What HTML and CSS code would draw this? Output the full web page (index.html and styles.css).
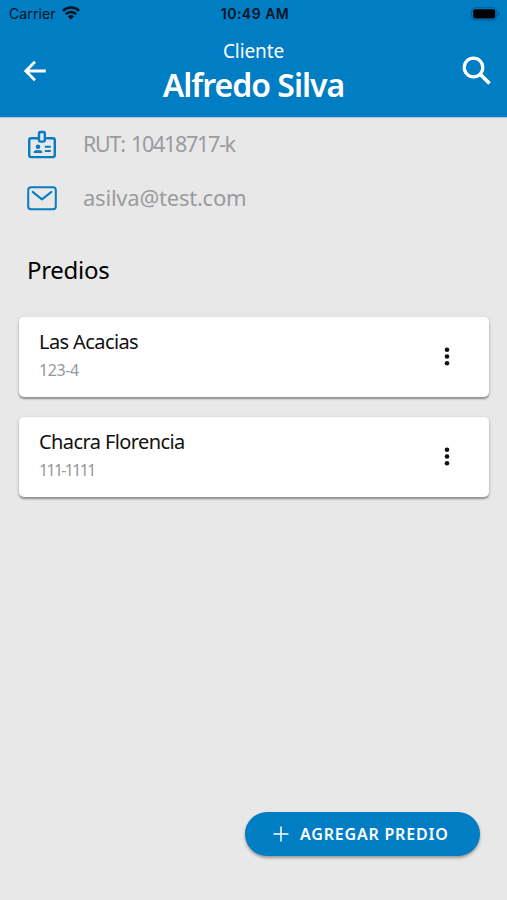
FILE: index.html
```html
<!DOCTYPE html>
<html lang="es">
<head>
<meta charset="utf-8">
<title>Cliente</title>
<link rel="stylesheet" href="styles.css">
</head>
<body>
<div class="screen">
  <header class="header">
    <div class="status">
      <div class="carrier"><span class="carrier-name">Carrier</span>
        <svg class="wifi" width="18" height="14" viewBox="0 0 18 14"><g fill="none" stroke="#001321" stroke-width="2.6"><path d="M.9 4.9a11.5 11.5 0 0 1 16.2 0"/><path d="M3.9 8.1a7.2 7.2 0 0 1 10.2 0"/></g><path fill="#001321" d="M5.9 10.3a4.4 4.4 0 0 1 6.2 0L9 13.5z"/></svg>
      </div>
      <span class="clock">10:49 AM</span>
      <svg class="battery" width="30" height="14" viewBox="0 0 30 14"><rect x=".7" y=".7" width="25" height="12.4" rx="3.4" fill="none" stroke="#005c94"/><rect x="2.2" y="2.2" width="22" height="9.4" rx="2" fill="#000"/><path d="M27 5v4q1.600-.6 1.600-2T27 5z" fill="#005c94"/></svg>
    </div>
    <div class="bar">
      <svg class="back" width="24" height="24" viewBox="0 0 24 24"><path d="M22.800 12H3M12 2.800 2.800 12l9.200 9.200" fill="none" stroke="#fff" stroke-width="2.800"/></svg>
      <div class="titles"><span class="kicker">Cliente</span><h1 class="name">Alfredo Silva</h1></div>
      <svg class="search" width="30" height="30" viewBox="0 0 30 30"><circle cx="11.500" cy="11.500" r="9.300" fill="none" stroke="#fff" stroke-width="3.200"/><path d="m18.500 18.500 9 9" stroke="#fff" stroke-width="3.700"/></svg>
    </div>
  </header>
  <main class="content">
    <div class="info">
      <svg width="30" height="30" viewBox="0 0 30 30"><g fill="none" stroke="#087cc1" stroke-width="2.400"><path d="M11.500 9.300H4.300Q2.200 9.300 2.200 11.400v14.600q0 2.100 2.100 2.100h21.400q2.100 0 2.100-2.100V11.400q0-2.100-2.100-2.100h-7.200"/><rect x="12" y="3" width="5.800" height="9.600" rx="1.600"/></g><g fill="#087cc1"><circle cx="11" cy="17.800" r="2.300"/><path d="M6.700 24.100v-1q0-2.200 4.300-2.200t4.300 2.200v1zM17.800 16.800h6v1.900h-6zM17.800 21.100h6v1.900h-6z"/></g></svg>
      <span class="rut">RUT: 10418717-k</span>
    </div>
    <div class="info">
      <svg width="30" height="30" viewBox="0 0 30 30"><g fill="none" stroke="#087cc1" stroke-width="2" stroke-linecap="round" stroke-linejoin="round"><rect x="1.200" y="4.300" width="27.600" height="22" rx="2.800"/><path d="m5.600 8.900 9.400 7.500 9.400-7.500"/></g></svg>
      <span class="mail">asilva@test.com</span>
    </div>
    <h2 class="section">Predios</h2>
    <div class="cards">
      <article class="card">
        <div class="card-text"><h3 class="card-title">Las Acacias</h3><p class="code">123-4</p></div>
        <svg width="6" height="20" viewBox="0 0 6 20" fill="#111"><circle cx="3" cy="2.700" r="2.300"/><circle cx="3" cy="9.500" r="2.300"/><circle cx="3" cy="16.300" r="2.300"/></svg>
      </article>
      <article class="card">
        <div class="card-text"><h3 class="card-title">Chacra Florencia</h3><p class="code ones">111-1111</p></div>
        <svg width="6" height="20" viewBox="0 0 6 20" fill="#111"><circle cx="3" cy="2.700" r="2.300"/><circle cx="3" cy="9.500" r="2.300"/><circle cx="3" cy="16.300" r="2.300"/></svg>
      </article>
    </div>
  </main>
  <button class="add"><svg width="16" height="16" viewBox="0 0 16 16"><path d="M8 .5v15M.5 8h15" stroke="#fff" stroke-width="1.500"/></svg><span>AGREGAR PREDIO</span></button>
</div>
</body>
</html>
```
FILE: styles.css
```css
* { box-sizing: border-box; margin: 0; padding: 0; }
body { background: #e8e8e8; font-family: "Noto Sans", sans-serif; }
svg { display: block; flex: none; }
.screen { width: 507px; height: 900px; display: flex; flex-direction: column; overflow: hidden; }
.header { height: 117px; background: #007dc3; box-shadow: 0 1px 1px #b8cbd8; }
.status { height: 27px; padding: 0 6px 0 9px; display: grid; grid-template-columns: 1fr auto 1fr; align-items: center; font-family: Inter, sans-serif; color: #001321; }
.carrier { display: flex; gap: 6px; align-items: center; font-size: 14px; letter-spacing: .1px; }
.wifi { margin-top: -2px; }
.clock { font-size: 14px; font-weight: 600; letter-spacing: .5px; }
.battery { justify-self: end; }
.bar { height: 90px; padding: 0 15px 0 23px; display: grid; grid-template-columns: 60px 1fr 68px; color: #fff; }
.back { margin-top: 32px; }
.search { justify-self: end; margin-top: 29px; }
.titles { display: flex; flex-direction: column; align-items: center; padding-top: 11px; white-space: nowrap; }
.kicker { font-size: 19px; line-height: 26px; letter-spacing: -.1px; }
.name { font-size: 32px; line-height: 42px; font-weight: 600; letter-spacing: -1px; }
.content { flex: 1; }
.info { height: 54px; padding: 0 27px; display: flex; gap: 26px; align-items: center; font-size: 22px; color: #9b9b9f; }
.mail { padding-bottom: 2px; }
.rut { letter-spacing: -1.3px; word-spacing: 2px; font-size: 21.5px; padding-bottom: 1px; }
.mail { letter-spacing: -.22px; }
.section { font-size: 24px; line-height: 34px; font-weight: 400; color: #000; padding: 0 27px; margin-top: 28px; letter-spacing: -.3px; }
.cards { display: flex; flex-direction: column; gap: 20px; padding: 0 18px 0 19px; margin-top: 30px; }
.card { height: 80px; padding: 0 39px 0 20px; display: flex; align-items: center; justify-content: space-between; background: #fff; border-radius: 5px; box-shadow: 0 2px 2px rgba(0,0,0,.34), 0 1px 4px rgba(0,0,0,.12); }
.card-text { padding-bottom: 3px; }
.card-title { font-size: 20px; line-height: 28px; font-weight: 400; color: #111; letter-spacing: -.6px; }
.code { font-size: 16px; line-height: 28px; color: #97979b; letter-spacing: -.4px; }
.ones { letter-spacing: -1.7px; }
.add { align-self: flex-end; width: 235px; height: 44px; margin: 0 27px 44px 0; padding-left: 28px; display: flex; align-items: center; gap: 11px; border: 0; border-radius: 22px; background: #007dc3; color: #fff; font: 600 16px "Noto Sans", sans-serif; letter-spacing: .8px; white-space: nowrap; box-shadow: 0 2px 3px rgba(0,0,0,.35); }
```
